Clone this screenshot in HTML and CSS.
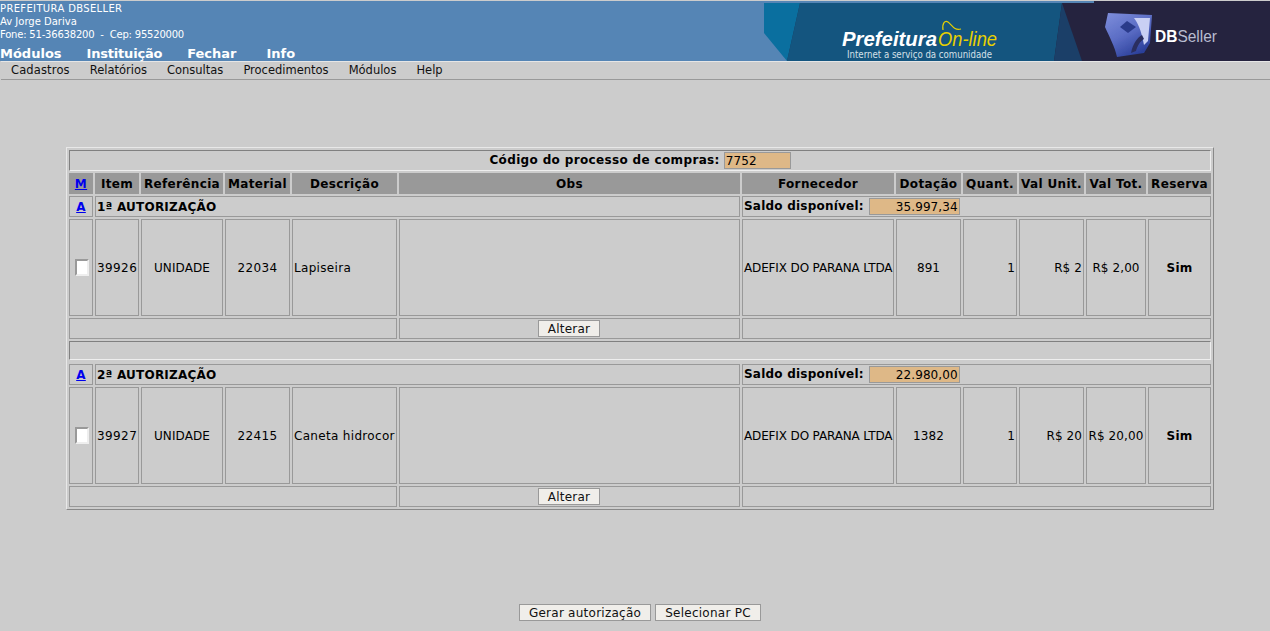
FILE: index.html
```html
<!DOCTYPE html>
<html lang="pt">
<head>
<meta charset="utf-8">
<title>DBSeller</title>
<link rel="stylesheet" href="styles.css">
</head>
<body>
<header class="top">
  <div class="inst">
    <div class="inst-lines">
      <div class="l1">PREFEITURA DBSELLER</div>
      <div>Av Jorge Dariva</div>
      <div class="l3">Fone: 51-36638200 &nbsp;-&nbsp; Cep: 95520000</div>
    </div>
    <nav class="mainnav"><span>Módulos</span><span class="n-inst">Instituição</span><span>Fechar</span><span class="n-info">Info</span></nav>
  </div>
  <svg class="banner" width="506" height="60" viewBox="0 0 506 60">
    <defs>
      <linearGradient id="cube" x1="0" y1="0" x2="0.6" y2="1"><stop offset="0" stop-color="#7f8fdc"/><stop offset="0.55" stop-color="#5a6cc4"/><stop offset="1" stop-color="#2b3f9a"/></linearGradient>
      <filter id="soft"><feGaussianBlur stdDeviation="0.6"/></filter>
    </defs>
    <rect width="506" height="60" fill="#25233f"/>
    <polygon points="36,2 298,2 290,60 23,60" fill="#14557f"/>
    <polygon points="298,2 318,60 290,60" fill="#1b3f68"/>
    <polygon points="0,2 36,2 23,60 0,60" fill="#0a6f9f"/>
    <polygon points="0,32 23,60 0,60" fill="#5585b5"/>
    <rect width="330" height="2" fill="#5585b5"/>
    <text x="78" y="45" class="b-pref" textLength="95" lengthAdjust="spacingAndGlyphs">Prefeitura</text>
    <text x="174" y="45" class="b-on" textLength="59" lengthAdjust="spacingAndGlyphs">On-line</text>
    <path d="M179 29 C178 22 181 19 184 21 C188 24 190 30 197 28" fill="none" stroke="#e8d000" stroke-width="1.2"/>
    <text x="83" y="57" class="b-sub" textLength="145" lengthAdjust="spacingAndGlyphs">Internet a serviço da comunidade</text>
    <g filter="url(#soft)">
      <path d="M344 12 L388 14 L386 42 L380 52 L353 56 C351 46 345 35 341 26 Z" fill="url(#cube)"/>
      <path d="M370 17 L386 17 L384 40 L380 44 C378 34 376 25 370 17 Z" fill="#c9d0f4"/>
      <path d="M363 20 L372 26 L364 32 L356 26 Z" fill="#2a3a8a"/>
      <path d="M367 52 C369 42 374 36 378 34 L380 38 C376 40 373 46 372 50 Z" fill="#2a2f60"/>
    </g>
    <text x="391" y="41" class="b-db" textLength="62" lengthAdjust="spacingAndGlyphs">DB<tspan class="b-seller">Seller</tspan></text>
  </svg>
</header>
<nav class="menu">
  <span class="m1">Cadastros</span><span>Relatórios</span><span>Consultas</span><span>Procedimentos</span><span>Módulos</span><span>Help</span>
</nav>
<main class="page">
  <form class="form">
    <table class="grid">
      <colgroup>
        <col class="c-m"><col class="c-item"><col class="c-ref"><col class="c-mat"><col class="c-desc"><col class="c-obs"><col class="c-forn"><col class="c-dot"><col class="c-qt"><col class="c-vu"><col class="c-vt"><col class="c-res">
      </colgroup>
      <tr class="r-code">
        <td colspan="12" class="inset center"><b>Código do processo de compras:</b> <span class="field code">7752</span></td>
      </tr>
      <tr class="r-head">
        <th><a href="#">M</a></th><th>Item</th><th>Referência</th><th>Material</th><th>Descrição</th><th>Obs</th><th>Fornecedor</th><th>Dotação</th><th>Quant.</th><th>Val Unit.</th><th>Val Tot.</th><th>Reserva</th>
      </tr>
      <tr class="r-aut">
        <td class="center"><a href="#"><b>A</b></a></td>
        <td colspan="5"><b class="aut">1ª AUTORIZAÇÃO</b></td>
        <td colspan="6"><b class="aut">Saldo disponível:</b> <span class="field saldo">35.997,34</span></td>
      </tr>
      <tr class="r-item">
        <td class="center"><span class="check"></span></td>
        <td class="center num">39926</td><td class="center">UNIDADE</td><td class="center num">22034</td><td class="desc">Lapiseira</td><td></td>
        <td class="nowrap forn">ADEFIX DO PARANA LTDA</td><td class="center">891</td><td class="right">1</td><td class="right">R$ 2</td><td class="center nowrap">R$ 2,00</td><td class="center"><b>Sim</b></td>
      </tr>
      <tr class="r-foot">
        <td colspan="5"></td><td><button type="button" class="btn btn-alt">Alterar</button></td><td colspan="6"></td>
      </tr>
      <tr class="r-sep"><td colspan="12" class="sep-cell"><div class="sep-bar"></div></td></tr>
      <tr class="r-aut">
        <td class="center"><a href="#"><b>A</b></a></td>
        <td colspan="5"><b class="aut">2ª AUTORIZAÇÃO</b></td>
        <td colspan="6"><b class="aut">Saldo disponível:</b> <span class="field saldo">22.980,00</span></td>
      </tr>
      <tr class="r-item">
        <td class="center"><span class="check"></span></td>
        <td class="center num">39927</td><td class="center">UNIDADE</td><td class="center num">22415</td><td class="nowrap desc">Caneta hidrocor</td><td></td>
        <td class="nowrap forn">ADEFIX DO PARANA LTDA</td><td class="center">1382</td><td class="right">1</td><td class="right">R$ 20</td><td class="center nowrap">R$ 20,00</td><td class="center"><b>Sim</b></td>
      </tr>
      <tr class="r-foot">
        <td colspan="5"></td><td><button type="button" class="btn btn-alt">Alterar</button></td><td colspan="6"></td>
      </tr>
    </table>
    <div class="actions">
      <button type="button" class="btn btn-gerar">Gerar autorização</button>
      <button type="button" class="btn btn-sel">Selecionar PC</button>
    </div>
  </form>
</main>
</body>
</html>
```
FILE: styles.css
```css
* { box-sizing: border-box; }
html, body { margin: 0; height: 100%; }
body {
  background: #cccccc;
  color: #000;
  font-family: "DejaVu Sans", sans-serif;
  font-size: 12px;
  overflow: hidden;
}
.top {
  display: flex;
  justify-content: space-between;
  height: 60px;
  margin-top: 1px;
  background: #5585b5;
  color: #fff;
  overflow: hidden;
}
.inst { display: flex; flex-direction: column; }
.inst-lines { font-size: 10px; line-height: 13px; height: 46px; flex: none; padding-top: 1px; white-space: nowrap; }
.l1 { letter-spacing: 0.35px; }
.l3 { letter-spacing: -0.2px; }
.mainnav { display: flex; gap: 25px; font-size: 13px; font-weight: bold; line-height: 14px; }
.n-inst { letter-spacing: -0.2px; }
.n-info { margin-left: 5px; }
.banner { display: block; flex: none; }
.b-pref { font: italic bold 20px "Liberation Sans", sans-serif; fill: #fff; }
.b-on { font: italic 20px "Liberation Sans", sans-serif; fill: #e8d000; }
.b-sub { font: 10px "DejaVu Sans", sans-serif; fill: #d5e0e8; }
.b-db { font: bold 16px "Liberation Sans", sans-serif; fill: #fff; }
.b-seller { font-weight: normal; fill: #b8bcd0; }
.menu {
  display: flex;
  gap: 20px;
  height: 19px;
  padding: 1px 0 0 10px;
  margin-left: 1px;
  border-top: 1px solid #e6e6e6;
  border-bottom: 1px solid #999;
  line-height: 15px;
  font-size: 11.5px;
  color: #111;
}
.m1 { letter-spacing: 0.14px; }
.page { padding: 67px 0 0 66px; }
.form { width: 1148px; }
.grid {
  table-layout: fixed;
  width: 1148px;
  border-collapse: separate;
  border-spacing: 2px;
  border: 1px solid;
  border-color: #e8e8e8 #888 #888 #e8e8e8;
  font-size: 12px;
  letter-spacing: 0.1px;
}
.grid td {
  border: 1px solid #999;
  padding: 0 1px;
  vertical-align: middle;
  overflow: hidden;
}
.grid th {
  background: #999;
  border: 0;
  padding: 0;
  font-size: 12px;
  font-weight: bold;
  letter-spacing: 0.35px;
  text-align: center;
  overflow: hidden;
  white-space: nowrap;
}
.grid a { color: #00e; text-decoration: underline; font-weight: bold; }
.grid td.inset { border-color: #808080 #eee #eee #808080; }
.grid b { font-size: 12px; letter-spacing: 0.35px; }
.grid b.aut { letter-spacing: 0.22px; }
.c-m { width: 24px; }
.c-item { width: 44px; }
.c-ref { width: 82px; }
.c-mat { width: 65px; }
.c-desc { width: 105px; }
.c-obs { width: 341px; }
.c-forn { width: 152px; }
.c-dot { width: 65px; }
.c-qt { width: 54px; }
.c-vu { width: 65px; }
.c-vt { width: 60px; }
.c-res { width: 63px; }
.r-code, .r-head, .r-aut, .r-foot, .r-sep { height: 21px; }
.r-item { height: 97px; }
.grid td.sep-cell { border: 0; padding: 0; vertical-align: top; }
.sep-bar {
  height: 19px;
  border: 1px solid;
  border-color: #808080 #eee #eee #808080;
}
.center { text-align: center; }
.right { text-align: right; }
.nowrap { white-space: nowrap; }
.grid .num { letter-spacing: 0.4px; }
.grid .forn { letter-spacing: -0.14px; }
.grid .desc { letter-spacing: 0.32px; }
.field {
  display: inline-block;
  height: 17px;
  line-height: 15px;
  padding: 1px 1px 0;
  background: #deb887;
  border: 1px solid #999;
  vertical-align: middle;
  text-align: left;
}
.code { width: 67px; }
.saldo { width: 91px; margin-left: 1px; text-align: right; }
.check {
  display: inline-block;
  width: 14px;
  height: 17px;
  margin-left: 2px;
  background: #fff;
  border: 2px solid;
  border-color: #999 #eee #eee #999;
  vertical-align: middle;
}
.btn {
  font: 12px "DejaVu Sans", sans-serif;
  letter-spacing: 0.25px;
  background: #f0eeea;
  color: #111;
  border: 1px solid #999;
  height: 17px;
  padding: 1px 0 0;
  display: block;
}
.btn-alt { width: 62px; margin-left: 137px; }
.actions {
  display: flex;
  gap: 4px;
  margin: 94px 0 0 453px;
}
.btn-gerar { width: 132px; }
.btn-sel { width: 106px; }
```
